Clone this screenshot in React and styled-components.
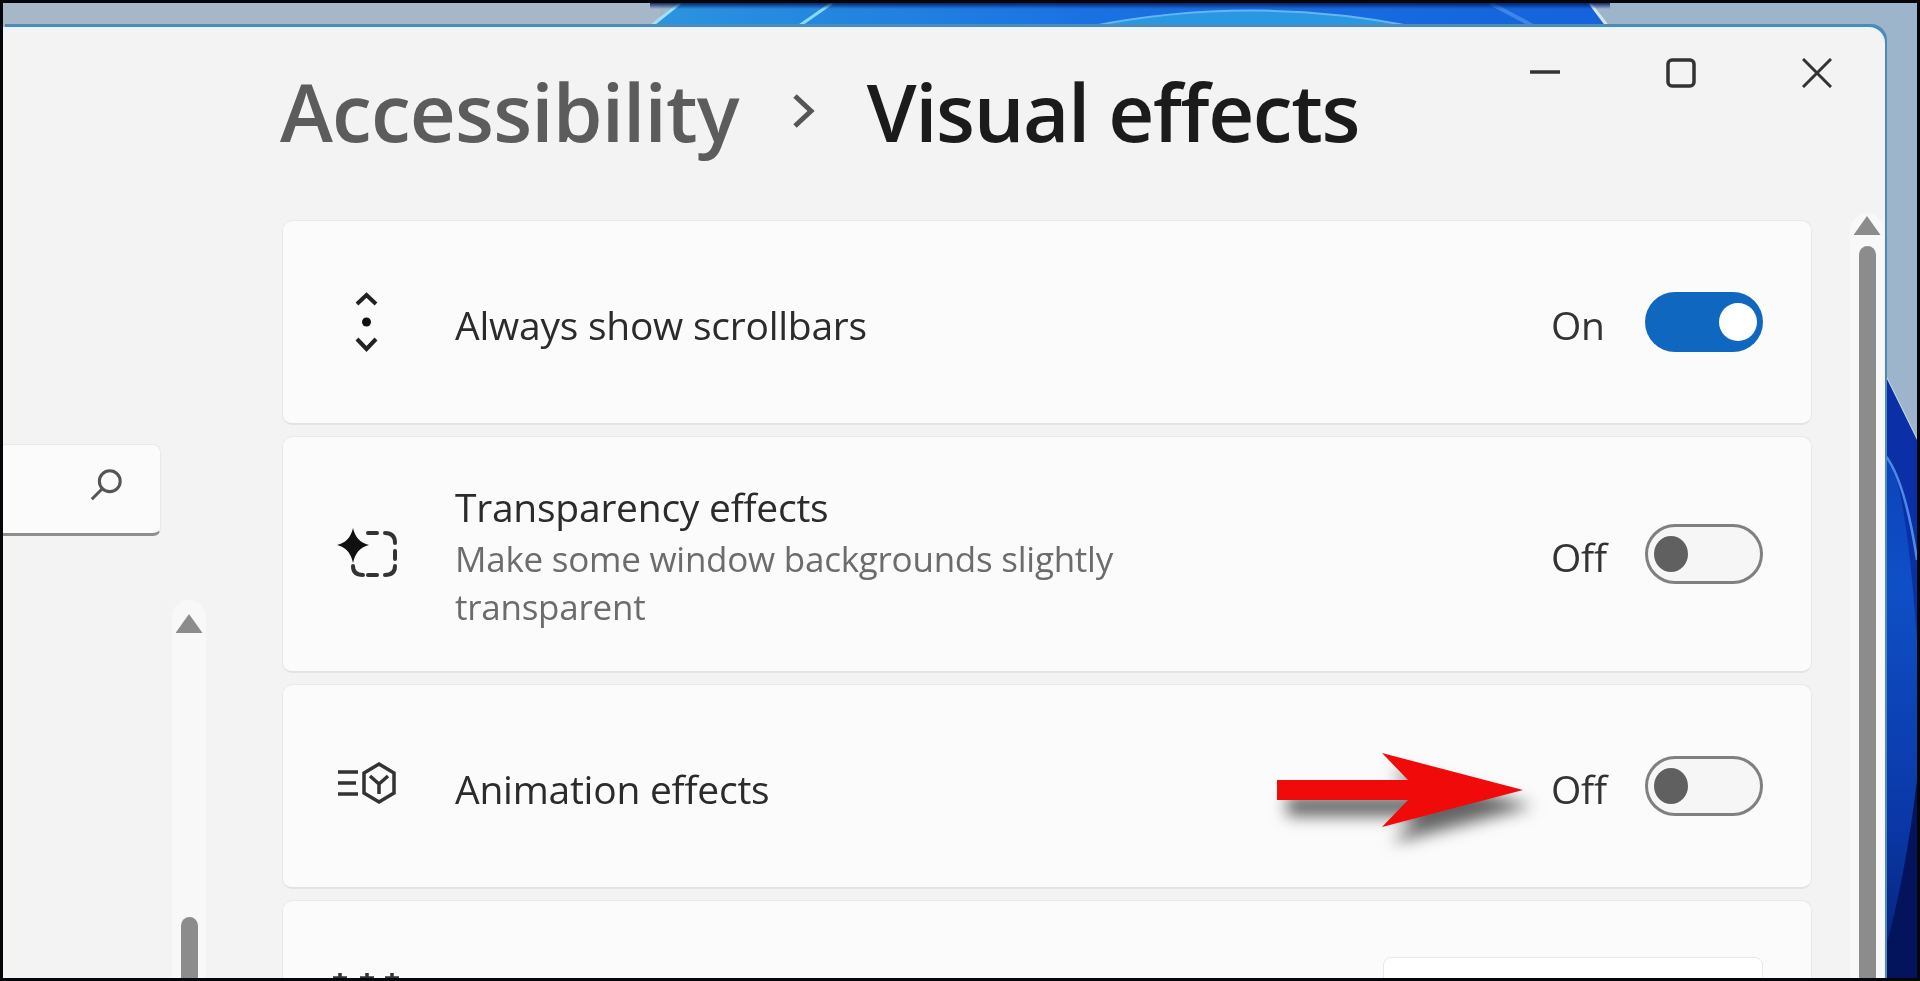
import React from "react";
import styled, { createGlobalStyle } from "styled-components";

const Global = createGlobalStyle`
  html, body { margin: 0; padding: 0; background: #000; overflow: hidden; }
  * { box-sizing: border-box; }
`;

const Frame = styled.div`
  position: relative;
  width: 1920px;
  height: 981px;
  border-style: solid;
  border-color: #05060a;
  border-width: 3px;
  overflow: hidden;
  display: flex;
  flex-direction: column;
  font-family: "Open Sans", "Noto Sans", sans-serif;
  filter: blur(0.7px);
`;

const Wallpaper = styled.svg`
  position: absolute;
  inset: 0;
  width: 1914px;
  height: 975px;
`;

const Win = styled.div`
  position: relative;
  flex: 1;
  margin: 24px 32px -20px 0;
  background: #f3f3f3;
  border-top: 2px solid #e2f7ff;
  border-radius: 0 16px 0 0;
  box-shadow: 2px -3px 0 0 #4f8ab6;
  display: grid;
  grid-template-columns: 279px 1fr;
`;

const Nav = styled.aside`
  display: flex;
  flex-direction: column;
  padding-top: 415px;
`;

const Search = styled.div`
  width: 158px;
  height: 92px;
  flex: none;
  background: #fbfbfb;
  border: 1px solid #e8e8e8;
  border-left: 0;
  border-bottom: 3px solid #8e8e8e;
  border-radius: 0 8px 8px 0;
  display: flex;
  align-items: center;
  justify-content: flex-end;
  padding: 0 36px 8px 0;
`;

const Track = styled.div`
  flex: 1;
  width: 34px;
  background: #f8f8f8;
  border-radius: 17px 17px 0 0;
  display: flex;
  flex-direction: column;
  align-items: center;
  margin: ${(p) => p.$margin};
  padding-top: ${(p) => p.$top}px;
`;

const ArrowUp = styled.div`
  width: 27px;
  height: 19px;
  flex: none;
  background: #8c8c8c;
  clip-path: polygon(50% 0, 100% 100%, 0 100%);
`;

const Thumb = styled.div`
  flex: 1;
  width: 17px;
  margin-top: ${(p) => p.$gap}px;
  background: #8c8c8c;
  border-radius: 9px 9px 0 0;
`;

const Main = styled.main`
  display: flex;
  flex-direction: column;
  min-width: 0;
`;

const Header = styled.header`
  height: 191px;
  flex: none;
  display: flex;
  align-items: flex-start;
  justify-content: space-between;
`;

const Crumbs = styled.h1`
  margin: 27px 0 0 -2px;
  display: flex;
  align-items: center;
  font-size: 80px;
  line-height: 110px;
  font-weight: 600;
  white-space: nowrap;
`;

const Parent = styled.span`
  color: #5c5c5c;
  letter-spacing: -0.85px;
`;

const Current = styled.span`
  color: #1b1b1b;
  margin-left: 52px;
  letter-spacing: -1.4px;
`;

const Chevron = styled.svg`
  width: 24px;
  height: 38px;
  margin-left: 52px;
`;

const Controls = styled.div`
  display: flex;
  padding-top: 29px;
`;

const Control = styled.div`
  width: 136px;
  height: 30px;
  display: flex;
  justify-content: center;
`;

const Body = styled.div`
  flex: 1;
  display: flex;
  min-height: 0;
`;

const List = styled.div`
  width: 1530px;
  flex: none;
  display: flex;
  flex-direction: column;
  gap: 11px;
`;

const Card = styled.section`
  position: relative;
  height: ${(p) => p.$h}px;
  flex: none;
  background: #fbfbfb;
  border: 1px solid #e9e9e9;
  border-bottom: 2px solid #e3e3e3;
  border-radius: 10px;
  display: flex;
  align-items: center;
  padding: 0 48px 0 47px;
`;

const IconSlot = styled.svg`
  width: 72px;
  height: 60px;
  flex: none;
  margin-top: ${(p) => p.$shift || 0}px;
`;

const Texts = styled.div`
  margin-left: 53px;
  margin-top: ${(p) => p.$shift || 0}px;
  flex: 1;
  min-width: 0;
  letter-spacing: -0.25px;
`;

const Label = styled.div`
  font-size: 39px;
  line-height: 48px;
  color: #2b2b2b;
  margin-top: ${(p) => p.$shift || 0}px;
`;

const Sub = styled.div`
  font-size: 35px;
  line-height: 48px;
  margin-top: 4px;
  color: #6c6c6c;
  width: 740px;
`;

const State = styled.span`
  width: 94px;
  flex: none;
  margin-top: 5px;
  font-size: 39px;
  line-height: 48px;
  letter-spacing: -0.25px;
  color: #333;
`;

const Toggle = styled.div`
  width: 118px;
  height: 60px;
  flex: none;
  border-radius: 30px;
  display: flex;
  align-items: center;
  justify-content: ${(p) => (p.$on ? "flex-end" : "flex-start")};
  padding: 0 6px;
  background: ${(p) => (p.$on ? "#0f67c0" : "#f6f6f6")};
  border: ${(p) => (p.$on ? "0" : "3px solid #808080")};
`;

const Knob = styled.div`
  width: ${(p) => (p.$on ? 38 : 34)}px;
  height: ${(p) => (p.$on ? 38 : 36)}px;
  border-radius: 50%;
  background: ${(p) => (p.$on ? "#fff" : "#606060")};
`;

const Dropdown = styled.div`
  width: 380px;
  height: 90px;
  margin-left: auto;
  background: #fff;
  border: 1px solid #e8e8e8;
  border-radius: 8px;
`;

const ArrowMark = styled.svg`
  position: absolute;
  left: 994px;
  top: 68px;
  width: 250px;
  height: 76px;
  overflow: visible;
  filter: drop-shadow(10px 16px 8px rgba(0, 0, 0, 0.6));
`;

const Gutter = styled.div`
  flex: 1;
  display: flex;
  flex-direction: column;
  margin-top: -7px;
  padding-left: 38px;
`;

const Scroll = () => (
  <IconSlot viewBox="0 0 72 60" fill="none" stroke="#222" strokeWidth="4">
    <path d="M27 12 L36.5 3 L46 12" />
    <circle cx="36.5" cy="30" r="4.5" fill="#111" stroke="none" />
    <path d="M27 47 L36.5 57 L46 47" />
  </IconSlot>
);

const Transparency = () => (
  <IconSlot viewBox="0 0 72 60" fill="none" stroke="#333" strokeWidth="4" strokeLinecap="round">
    <path d="M38 9 H47 M55 9 Q65 9 65 19 M65 27 V35 M65 42 Q65 51 55 51 M38 51 H47 M23 42 Q23 51 33 51" />
    <path d="M23 4 Q26 18 39 21 Q26 24 23 39 Q20 24 7 21 Q20 18 23 4 Z" fill="#111" stroke="none" />
  </IconSlot>
);

const Animation = () => (
  <IconSlot viewBox="0 0 72 60" fill="none" stroke="#333" strokeWidth="3.5" $shift={-4}>
    <path d="M8 18 H28 M8 29 H26 M8 40 H28" />
    <path d="M49 10 L64 19 V39 L49 48 L34 39 V19 Z" />
    <path d="M40 22 L49 30 L58 22 M49 30 V40" />
  </IconSlot>
);

const Sliders = () => (
  <IconSlot viewBox="0 0 72 60" fill="none" stroke="#333" strokeWidth="3.5">
    <path d="M10 1 V60 M37 1 V60 M62 1 V60 M3 6 H17 M30 6 H44 M55 6 H69" />
  </IconSlot>
);

export default function App() {
  return (
    <>
      <Global />
      <Frame>
        <Wallpaper viewBox="3 3 1914 975" preserveAspectRatio="none">
          <defs>
            <linearGradient id="band" x1="0" x2="1" y1="0" y2="0">
              <stop offset="0" stopColor="#2b94de" />
              <stop offset="0.45" stopColor="#1a72e2" />
              <stop offset="1" stopColor="#1463dc" />
            </linearGradient>
            <linearGradient id="topShade" x1="0" x2="0" y1="0" y2="1">
              <stop offset="0" stopColor="#03185c" stopOpacity="0.9" />
              <stop offset="1" stopColor="#03185c" stopOpacity="0" />
            </linearGradient>
            <linearGradient id="side" x1="0" x2="0" y1="0" y2="1">
              <stop offset="0" stopColor="#0a3cb4" />
              <stop offset="0.35" stopColor="#0f4fc6" />
              <stop offset="0.75" stopColor="#0a37a6" />
              <stop offset="1" stopColor="#061f70" />
            </linearGradient>
          </defs>
          <rect x="0" y="0" width="1920" height="981" fill="#9db5ca" />
          <rect x="0" y="0" width="660" height="30" fill="#a6b7c8" />
          <path d="M680 0 L650 27 H1608 L1590 0 Z" fill="url(#band)" />
          <path d="M680 3 L650 27" stroke="#9fe2f5" strokeWidth="3" />
          <path d="M832 3 L799 26" stroke="#86dcf2" strokeWidth="3" />
          <path d="M1590 3 L1608 27" stroke="#d5e6f2" strokeWidth="3" />
          <path d="M1088 27 Q1250 -6 1416 27 Z" fill="#2997e2" stroke="#66b6ee" strokeWidth="2" />
          <path d="M1490 3 L1535 27" stroke="#3b86e6" strokeWidth="4" />
          <rect x="650" y="3" width="960" height="6" fill="url(#topShade)" />
          <path d="M1885 375 L1917 440 V981 H1885 Z" fill="url(#side)" />
          <path d="M1885 375 L1917 440" stroke="#c3d9f0" strokeWidth="2" />
          <path d="M1885 375 L1917 440 V640 Q1905 470 1885 455 Z" fill="#0b2fa6" />
          <path d="M1885 455 Q1905 480 1917 560" fill="none" stroke="#4c8ae8" strokeWidth="2.5" />
          <path d="M1917 780 Q1905 880 1885 950 V981 H1917 Z" fill="#04145c" />
        </Wallpaper>
        <Win>
          <Nav>
            <Search>
              <svg width="36" height="36" viewBox="0 0 38 38" fill="none" stroke="#555" strokeWidth="3.2">
                <circle cx="23" cy="15" r="11" />
                <path d="M15 23 L4 34" />
              </svg>
            </Search>
            <Track $margin="64px 0 0 169px" $top={14}>
              <ArrowUp />
              <Thumb $gap={284} />
            </Track>
          </Nav>
          <Main>
            <Header>
              <Crumbs>
                <Parent>Accessibility</Parent>
                <Chevron viewBox="0 0 24 38" fill="none" stroke="#555" strokeWidth="5">
                  <path d="M4 4 L20 19 L4 34" />
                </Chevron>
                <Current>Visual effects</Current>
              </Crumbs>
              <Controls>
                <Control>
                  <svg width="30" height="30" viewBox="0 0 30 30" stroke="#333" strokeWidth="3.5">
                    <path d="M0 14 H30" />
                  </svg>
                </Control>
                <Control>
                  <svg width="30" height="30" viewBox="0 0 30 30" fill="none" stroke="#333" strokeWidth="3.5">
                    <rect x="2" y="2" width="26" height="26" rx="4" />
                  </svg>
                </Control>
                <Control>
                  <svg width="30" height="30" viewBox="0 0 30 30" stroke="#333" strokeWidth="3">
                    <path d="M1 1 L29 29 M29 1 L1 29" />
                  </svg>
                </Control>
              </Controls>
            </Header>
            <Body>
              <List>
                <Card $h={205}>
                  <Scroll />
                  <Texts>
                    <Label $shift={6}>Always show scrollbars</Label>
                  </Texts>
                  <State>On</State>
                  <Toggle $on>
                    <Knob $on />
                  </Toggle>
                </Card>
                <Card $h={237}>
                  <Transparency />
                  <Texts $shift={6}>
                    <Label>Transparency effects</Label>
                    <Sub>Make some window backgrounds slightly transparent</Sub>
                  </Texts>
                  <State>Off</State>
                  <Toggle>
                    <Knob />
                  </Toggle>
                </Card>
                <Card $h={205}>
                  <Animation />
                  <Texts>
                    <Label $shift={6}>Animation effects</Label>
                  </Texts>
                  <State>Off</State>
                  <Toggle>
                    <Knob />
                  </Toggle>
                  <ArrowMark viewBox="0 0 250 76">
                    <polygon points="0,27 131,27 105,0 246,37 105,74 131,47 0,47" fill="#f00a0a" />
                  </ArrowMark>
                </Card>
                <Card $h={205}>
                  <Sliders />
                  <Dropdown />
                </Card>
              </List>
              <Gutter>
                <Track $margin="0" $top={3}>
                  <ArrowUp />
                  <Thumb $gap={11} />
                </Track>
              </Gutter>
            </Body>
          </Main>
        </Win>
      </Frame>
    </>
  );
}
